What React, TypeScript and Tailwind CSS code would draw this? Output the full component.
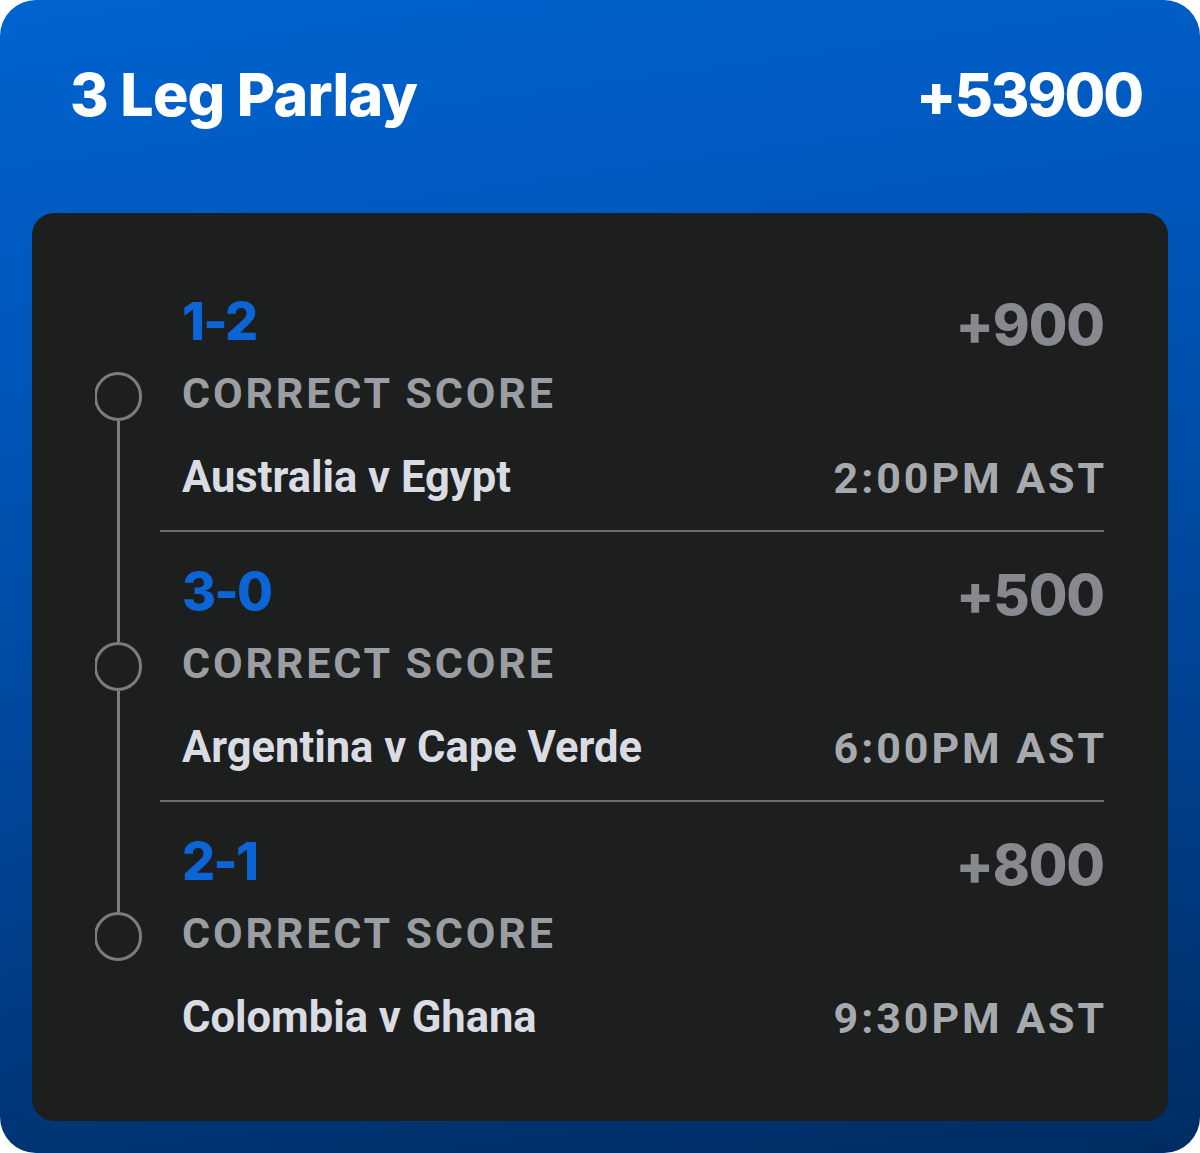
const legs = [
  { score: "1-2", odds: "+900", match: "Australia v Egypt", time: "2:00PM AST" },
  { score: "3-0", odds: "+500", match: "Argentina v Cape Verde", time: "6:00PM AST" },
  { score: "2-1", odds: "+800", match: "Colombia v Ghana", time: "9:30PM AST" },
];

const display = { fontFamily: "Inter, Lato, sans-serif" };
const body = { fontFamily: "Roboto, 'Liberation Sans', sans-serif" };

function Leg({ leg, index }: { leg: (typeof legs)[number]; index: number }) {
  const first = index === 0;
  const last = index === legs.length - 1;

  return (
    <div className="flex h-[270px]">
      {/* timeline rail */}
      <div className="flex w-[65px] flex-col overflow-hidden">
        <div className={`ml-[22px] h-[110px] w-[3px] ${first ? "" : "bg-[#7b7c7e]"}`} />
        <div className="-ml-[1px] h-[49px] w-[48px] shrink-0 rounded-full border-[3px] border-[#7b7c7e]" />
        <div className={`ml-[22px] flex-1 w-[3px] ${last ? "" : "bg-[#7b7c7e]"}`} />
      </div>

      <div className={`flex flex-1 flex-col pl-[22px] ${last ? "" : "border-b-2 border-[#6a6c6f]"}`}>
        <div className="mt-[32px] flex h-[56px] items-start justify-between">
          <span className="text-[52px] leading-[56px] font-extrabold tracking-[-0.035em] text-[#0b65d6]" style={display}>
            {leg.score}
          </span>
          <span className="translate-y-[3px] text-[56px] leading-[56px] font-extrabold tracking-[-0.02em] text-[#86898d]" style={display}>
            {leg.odds}
          </span>
        </div>
        <div
          className="mt-[18px] text-[43px] leading-[50px] font-bold tracking-[0.066em] text-[#9a9ea3]"
          style={body}
        >
          CORRECT SCORE
        </div>
        <div className="mt-[35px] flex items-center justify-between" style={body}>
          <span className="text-[43.5px] leading-[50px] font-bold text-[#d9dde3]">{leg.match}</span>
          <span className="-mr-[3px] text-[43px] leading-[50px] font-bold tracking-[0.068em] text-[#a6aaaf]">
            {leg.time}
          </span>
        </div>
      </div>
    </div>
  );
}

export default function App() {
  return (
    <div className="min-h-[1153px] bg-white">
      <div className="flex h-[1153px] w-[1200px] flex-col rounded-[36px] bg-[linear-gradient(172deg,#0063cf_0%,#0058bd_25%,#00469a_60%,#002c62_100%)] px-[32px] pb-[32px]">
        <header className="flex h-[213px] items-start justify-between pl-[38px] pr-[26px] pt-[63px] text-white" style={display}>
          <h1 className="text-[59px] leading-[64px] font-extrabold tracking-[-0.012em]">3 Leg Parlay</h1>
          <span className="text-[59px] leading-[64px] font-extrabold tracking-[-0.035em]">+53900</span>
        </header>

        <main className="flex-1 rounded-[22px] bg-[#1d1e1e] pl-[63px] pr-[64px] pt-[49px]">
          {legs.map((leg, i) => (
            <Leg key={leg.score} leg={leg} index={i} />
          ))}
        </main>
      </div>
    </div>
  );
}
